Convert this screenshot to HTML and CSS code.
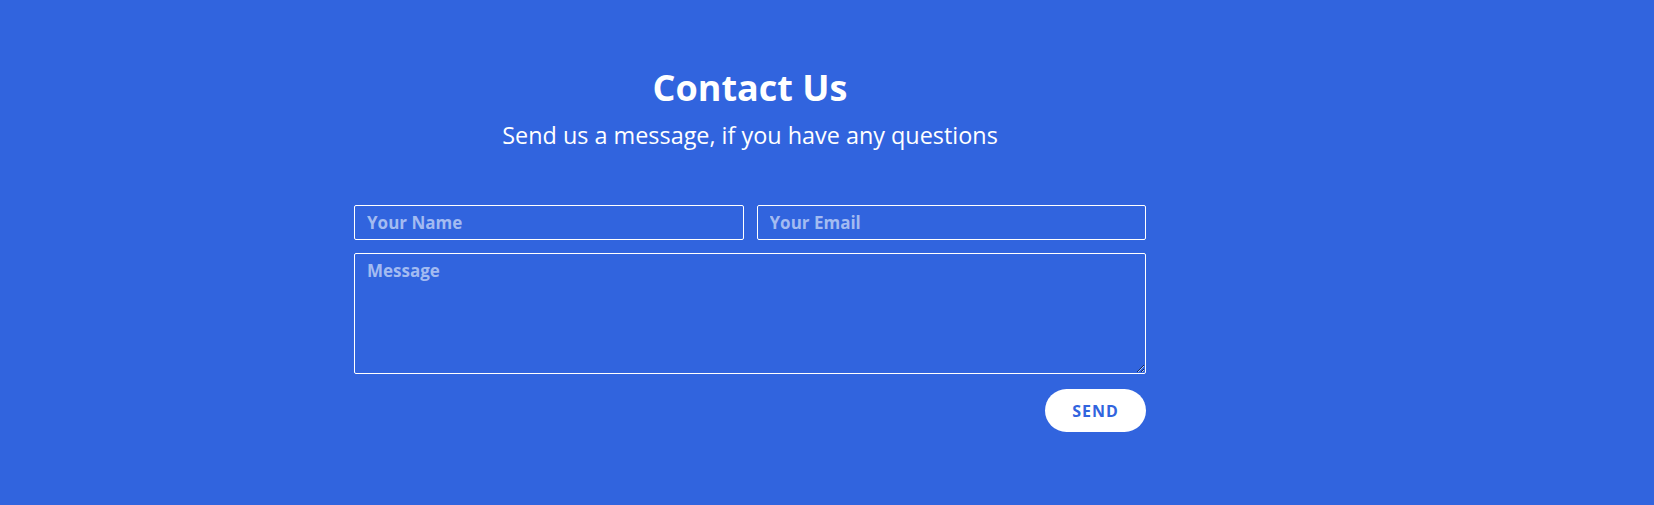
FILE: index.html
```html
<!DOCTYPE html>
<html>
<head>
<meta charset="utf-8">
<link rel="stylesheet" href="styles.css">
</head>
<body>
<section class="contact">
  <div class="contact-inner">
    <h1 class="title">Contact Us</h1>
    <p class="subtitle">Send us a message, if you have any questions</p>
    <form class="form">
      <div class="row">
        <input class="field" type="text" placeholder="Your Name">
        <input class="field" type="email" placeholder="Your Email">
      </div>
      <textarea class="field message" placeholder="Message"></textarea>
      <div class="actions">
        <button class="send" type="button">SEND</button>
      </div>
    </form>
  </div>
</section>
</body>
</html>
```
FILE: styles.css
```css
html, body {
  margin: 0;
  padding: 0;
  background: #3164de;
  height: 100%;
}
body {
  font-family: "Open Sans", "Liberation Sans", sans-serif;
  color: #fff;
}
.contact {
  padding-top: 65px;
}
.contact-inner {
  width: 792px;
  margin-left: 354px;
}
.title {
  margin: 0;
  font-size: 36px;
  font-weight: 700;
  line-height: 46px;
  text-align: center;
}
.subtitle {
  margin: 9px 0 0;
  font-size: 23.4px;
  font-weight: 400;
  line-height: 30px;
  text-align: center;
}
.form {
  margin-top: 55px;
  display: flex;
  flex-direction: column;
  gap: 13px;
}
.row {
  display: flex;
  gap: 13px;
}
.field {
  box-sizing: border-box;
  height: 35px;
  border: 1px solid #fff;
  border-radius: 2px;
  background: transparent;
  color: #fff;
  font-family: "Open Sans", "Liberation Sans", sans-serif;
  font-size: 17px;
  font-weight: 700;
  padding: 0 12px;
  outline: none;
}
.row .field {
  flex: 1;
  min-width: 0;
}
.field::placeholder {
  color: #a3bbf1;
  opacity: 1;
}
.message {
  flex: none;
  height: 121px;
  padding: 5px 12px;
  resize: vertical;
}
.actions {
  display: flex;
  justify-content: flex-end;
  margin-top: 2px;
}
.send {
  width: 101px;
  height: 43px;
  border: none;
  border-radius: 22px;
  background: #fff;
  color: #3164de;
  font-family: "Open Sans", "Liberation Sans", sans-serif;
  font-size: 16px;
  font-weight: 700;
  letter-spacing: 1px;
  cursor: pointer;
}
```
